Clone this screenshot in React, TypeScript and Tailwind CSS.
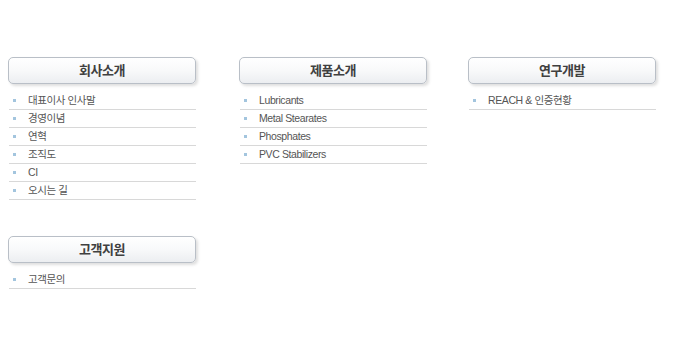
const sections = [
  { title: "회사소개", items: ["대표이사 인사말", "경영이념", "연혁", "조직도", "CI", "오시는 길"] },
  { title: "제품소개", items: ["Lubricants", "Metal Stearates", "Phosphates", "PVC Stabilizers"] },
  { title: "연구개발", items: ["REACH & 인증현황"] },
]

function Menu({ title, items }: { title: string; items: string[] }) {
  return (
    <div className="w-[188px]">
      {/* header tab */}
      <div className="h-[27px] rounded-[5px] border border-[#b9bfc7] bg-gradient-to-b from-white via-[#f8f9fa] to-[#eceef1] shadow-[2px_2px_3px_rgba(0,0,0,0.13)] flex items-center justify-center">
        <span className="text-[13px] font-bold text-[#404040] tracking-[-0.5px]">{title}</span>
      </div>
      <ul className="mt-[8px] w-[187px] ml-[1px]">
        {items.map(item => (
          <li key={item} className="h-[18px] border-b border-[#d8d8d8] flex items-center">
            <span className="ml-[4px] w-[3px] h-[3px] bg-[#a3c5de]" />
            <span className="ml-[12px] text-[10.5px] text-[#555] tracking-[-0.4px] leading-none">{item}</span>
          </li>
        ))}
      </ul>
    </div>
  )
}

export default function App() {
  return (
    <div className="w-[675px] h-[353px] bg-white pt-[57px] pl-[8px]" style={{ fontFamily: '"Liberation Sans", "Noto Sans CJK KR", sans-serif' }}>
      <div className="flex">
        <Menu {...sections[0]} />
        <div className="ml-[43px]"><Menu {...sections[1]} /></div>
        <div className="ml-[41px]"><Menu {...sections[2]} /></div>
      </div>
      <div className="mt-[36px]">
        <Menu title="고객지원" items={["고객문의"]} />
      </div>
    </div>
  )
}
